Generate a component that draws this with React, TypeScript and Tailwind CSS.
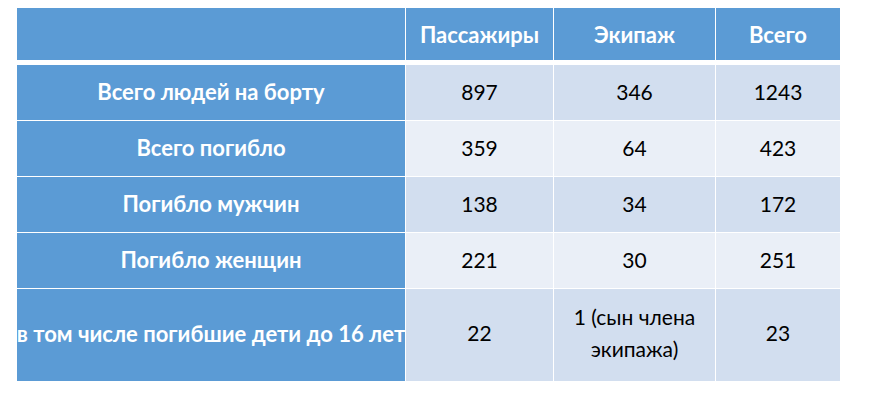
const rows = [
  { label: "Всего людей на борту", values: ["897", "346", "1243"] },
  { label: "Всего погибло", values: ["359", "64", "423"] },
  { label: "Погибло мужчин", values: ["138", "34", "172"] },
  { label: "Погибло женщин", values: ["221", "30", "251"] },
];

const headers = ["Пассажиры", "Экипаж", "Всего"];

export default function App() {
  return (
    <div
      className="w-[872px] h-[412px] bg-white pt-[8px] pl-[17px]"
      style={{ fontFamily: "Lato, 'Open Sans', sans-serif" }}
    >
      <div className="grid grid-cols-[388px_147px_161px_124px] gap-px">
        {/* Header */}
        <div className="h-[52px] bg-[#5b9bd5]" />
        {headers.map((h) => (
          <div
            key={h}
            className="h-[52px] bg-[#5b9bd5] flex items-center justify-center text-white font-bold text-[22px]"
          >
            {h}
          </div>
        ))}
        <div className="col-span-4 h-[3px]" />

        {rows.map((row, i) => {
          const bg = i % 2 === 0 ? "bg-[#d2deef]" : "bg-[#eaeff7]";
          return [
            <div
              key={row.label}
              className="h-[55px] pb-[2px] bg-[#5b9bd5] flex items-center justify-center text-white font-bold text-[22px]"
            >
              {row.label}
            </div>,
            ...row.values.map((v, j) => (
              <div
                key={row.label + j}
                className={`h-[55px] pb-[2px] ${bg} flex items-center justify-center text-black text-[21px]`}
              >
                {v}
              </div>
            )),
          ];
        })}

        {/* Last row */}
        <div className="h-[92px] pb-[4px] bg-[#5b9bd5] flex items-center justify-center text-white font-bold text-[22px] whitespace-nowrap">
          в том числе погибшие дети до 16 лет
        </div>
        <div className="h-[92px] pb-[4px] bg-[#d2deef] flex items-center justify-center text-black text-[21px]">
          22
        </div>
        <div className="h-[92px] pb-[4px] bg-[#d2deef] flex items-center justify-center text-center text-black text-[21px] leading-[32px]">
          1 (сын члена
          <br />
          экипажа)
        </div>
        <div className="h-[92px] pb-[4px] bg-[#d2deef] flex items-center justify-center text-black text-[21px]">
          23
        </div>
      </div>
    </div>
  );
}
